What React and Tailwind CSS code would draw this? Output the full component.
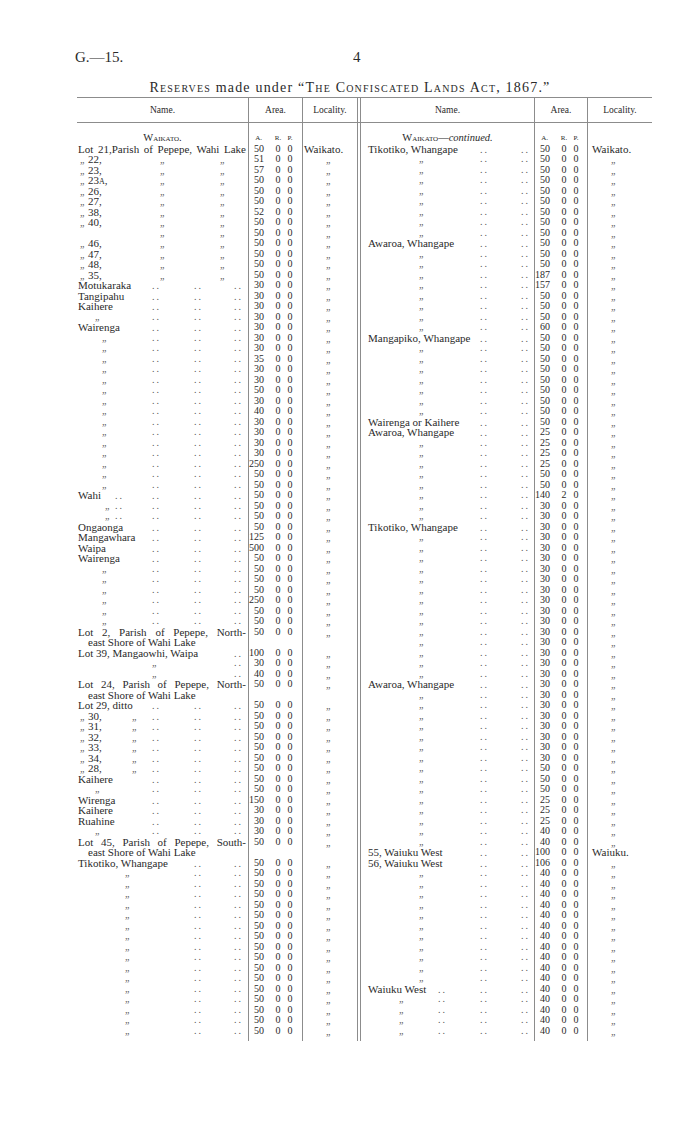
import React from 'react';

const ML = {
  1: 'ml-[1px]', 3: 'ml-[3px]', 7: 'ml-[7px]', 11: 'ml-[11px]', 18: 'ml-[18px]', 25: 'ml-[25px]',
  28: 'ml-[28px]', 38: 'ml-[38px]', 48: 'ml-[48px]', 55: 'ml-[55px]', 58: 'ml-[58px]', 75: 'ml-[75px]',
  77: 'ml-[77px]', 83: 'ml-[83px]', 117: 'ml-[117px]', 119: 'ml-[119px]', 143: 'ml-[143px]',
  157: 'ml-[157px]', 160: 'ml-[160px]',
};

const t = (x, s, j) => ({ x, s, j });
const d = (x) => ({ x, k: 'd' });
const p = (x) => ({ x, k: 'p' });
const LD = [p(75), p(117), p(157)];
const RD = [p(119), p(160)];

/* ── left half ── */
const left = [];
const L = (n, a, l = 'd') => left.push({ n, a, l });

L([t(1, 'Lot 21,Parish of Pepepe, Wahi Lake', true)], '50', 'Waikato.');
[['22,', '51'], ['23,', '57'], ['23A', '50'], ['26,', '50'], ['27,', '50'], ['38,', '52'], ['40,', '50'],
  [null, '50'], ['46,', '50'], ['47,', '50'], ['48,', '50'], ['35,', '50']].forEach(([n, a]) => {
  const num = n === '23A' ? <>23<span className="text-[8px]">A</span>,</> : n;
  L(n ? [d(3), t(11, num), d(83), d(143)] : [d(83), d(143)], a);
});
L([t(1, 'Motukaraka'), ...LD], '30');
L([t(1, 'Tangipahu'), ...LD], '30');
L([t(1, 'Kaihere'), ...LD], '30');
L([d(18), ...LD], '30');
L([t(1, 'Wairenga'), ...LD], '30');
['30', '30', '35', '30', '30', '50', '30', '40', '30', '30', '30', '30', '250', '50', '50']
  .forEach((a) => L([d(25), ...LD], a));
L([t(1, 'Wahi'), p(38), ...LD], '50');
L([d(28), p(38), ...LD], '50');
L([d(28), p(38), ...LD], '50');
L([t(1, 'Ongaonga'), ...LD], '50');
L([t(1, 'Mangawhara'), ...LD], '125');
L([t(1, 'Waipa'), ...LD], '500');
L([t(1, 'Wairenga'), ...LD], '50');
['50', '50', '50', '250', '50', '50'].forEach((a) => L([d(25), ...LD], a));
L([t(1, 'Lot 2, Parish of Pepepe, North-', true)], '50');
L([t(11, 'east Shore of Wahi Lake')], null, '');
L([t(1, 'Lot 39, Mangaowhi, Waipa'), p(157)], '100');
L([d(75), p(157)], '30');
L([d(75), p(157)], '40');
L([t(1, 'Lot 24, Parish of Pepepe, North-', true)], '50');
L([t(11, 'east Shore of Wahi Lake')], null, '');
L([t(1, 'Lot 29, ditto'), ...LD], '50');
['30,', '31,', '32,', '33,', '34,', '28,'].forEach((n) => L([d(3), t(11, n), d(55), ...LD], '50'));
L([t(1, 'Kaihere'), ...LD], '50');
L([d(18), ...LD], '50');
L([t(1, 'Wirenga'), ...LD], '150');
L([t(1, 'Kaihere'), ...LD], '30');
L([t(1, 'Ruahine'), ...LD], '30');
L([d(18), ...LD], '30');
L([t(1, 'Lot 45, Parish of Pepepe, South-', true)], '50');
L([t(11, 'east Shore of Wahi Lake')], null, '');
L([t(1, 'Tikotiko, Whangape'), p(117), p(157)], '50');
for (let i = 0; i < 16; i++) L([d(48), p(117), p(157)], '50');

/* ── right half ── */
const right = [];
const R = (n, a, l = 'd') => right.push({ n, a, l });
const RD_ = [d(58), ...RD];

R([t(7, 'Tikotiko, Whangape'), ...RD], '50', 'Waikato.');
for (let i = 0; i < 8; i++) R(RD_, '50');
R([t(7, 'Awaroa, Whangape'), ...RD], '50');
['50', '50', '187', '157', '50', '50', '50', '60'].forEach((a) => R(RD_, a));
R([t(7, 'Mangapiko, Whangape'), ...RD], '50');
for (let i = 0; i < 7; i++) R(RD_, '50');
R([t(7, 'Wairenga or Kaihere'), ...RD], '50');
R([t(7, 'Awaroa, Whangape'), ...RD], '25');
['25', '25', '25', '50', '50', '140 2 0', '30', '30'].forEach((a) => R(RD_, a));
R([t(7, 'Tikotiko, Whangape'), ...RD], '30');
for (let i = 0; i < 14; i++) R(RD_, '30');
R([t(7, 'Awaroa, Whangape'), ...RD], '30');
['30', '30', '30', '30', '30', '30', '30', '50', '50', '50', '25', '25', '25', '40', '40']
  .forEach((a) => R(RD_, a));
R([t(7, '55, Waiuku West'), ...RD], '100', 'Waiuku.');
R([t(7, '56, Waiuku West'), ...RD], '106');
for (let i = 0; i < 11; i++) R(RD_, '40');
R([t(7, 'Waiuku West'), p(77), ...RD], '40');
for (let i = 0; i < 4; i++) R([d(38), p(77), ...RD], '40');

const line = 'border-[#8c8c8c]';

const Ditto = () => <span className="text-[10px] text-[#555]">„</span>;

function Piece({ q }) {
  const base = `col-start-1 row-start-1 justify-self-start whitespace-nowrap ${ML[q.x]}`;
  if (q.k === 'd') return <span className={`${base} text-[10px] text-[#555]`}>„</span>;
  if (q.k === 'p') return <span className={`${base} text-[10px] tracking-[2px] text-[#555]`}>..</span>;
  return (
    <span className={`${base} ${q.j ? 'w-[168px] [text-align-last:justify]' : ''}`}>{q.s}</span>
  );
}

function Area({ a, w }) {
  const [A, Rr, P] = a ? a.split(' ').concat(['0', '0']).slice(0, 3) : ['', '', ''];
  return (
    <div className={`flex border-l ${line} text-[10px] ${w}`}>
      <span className="w-[15px] text-right">{A}</span>
      <span className="ml-[8px] w-[12px] text-center">{Rr}</span>
      <span className="w-[12px] text-center">{P}</span>
    </div>
  );
}

function Row({ r, left: isL, h = 'h-[10.5px]' }) {
  const locPad = r.l === 'd' ? 'pl-[23px]' : isL ? 'pl-[1px]' : 'pl-[4px]';
  return (
    <div className={`flex ${h} leading-[10.5px]`}>
      <div className={`grid items-baseline text-[11px] ${isL ? 'w-[171px]' : `w-[174px] border-l ${line}`}`}>
        {r.n.map((q, i) => <Piece key={i} q={q} />)}
      </div>
      <Area a={r.a} w={isL ? 'w-[54px]' : 'w-[53px]'} />
      <div className={`border-l ${line} text-[11px] ${isL ? 'w-[56px] border-r' : 'flex-1'} ${locPad}`}>
        {r.l === 'd' ? <Ditto /> : r.l}
      </div>
    </div>
  );
}

function Heading({ isL }) {
  return (
    <div className="flex h-[10.5px] leading-[10.5px]">
      <div className={`text-center text-[10.5px] ${isL ? 'w-[171px]' : `w-[174px] border-l ${line}`}`}>
        <span className="[font-variant:small-caps]">Waikato</span>
        {isL ? '.' : <>—<i>continued.</i></>}
      </div>
      <div className={`flex border-l ${line} text-[7px] uppercase ${isL ? 'w-[54px]' : 'w-[53px]'}`}>
        <span className="w-[15px] text-right pr-[2px]">a.</span>
        <span className="ml-[8px] w-[12px] text-center">r.</span>
        <span className="w-[12px] text-center">p.</span>
      </div>
      <div className={`border-l ${line} ${isL ? 'w-[56px] border-r' : 'flex-1'}`} />
    </div>
  );
}

const empty = { n: [], a: null, l: '' };

function Half({ rows, isL }) {
  return (
    <div className={isL ? 'w-[281px]' : 'ml-[2px] flex-1'}>
      <Row r={empty} left={isL} h="h-[10px]" />
      <Heading isL={isL} />
      {rows.map((r, i) => <Row key={i} r={r} left={isL} />)}
      <Row r={empty} left={isL} h="h-[5px]" />
    </div>
  );
}

export default function App() {
  return (
    <div className="w-[700px] h-[1141px] overflow-hidden bg-white pt-[48px] text-[#2a2a2a] font-['Liberation_Serif','Times_New_Roman',serif]">
      <div className="ml-[75px] flex h-[18px] items-center text-[15px]">
        <span className="w-[278px]">G.—15.</span>
        <span>4</span>
      </div>
      <div className="mt-[15px] h-[14px] text-center text-[14px] leading-[14px] tracking-[1.2px]">
        <span className="[font-variant:small-caps]">Reserves</span> made under “
        <span className="[font-variant:small-caps]">The Confiscated Lands Act</span>, 1867.”
      </div>
      <div className="ml-[77px] mt-[2px] w-[575px]">
        <div className={`flex h-[26px] border-y ${line} text-[9.5px]`}>
          <div className="flex w-[171px] items-center justify-center">Name.</div>
          <div className={`flex w-[54px] items-center justify-center border-l ${line}`}>Area.</div>
          <div className={`flex w-[56px] items-center justify-center border-x ${line}`}>Locality.</div>
          <div className="w-[2px]" />
          <div className={`flex w-[174px] items-center justify-center border-l ${line}`}>Name.</div>
          <div className={`flex w-[53px] items-center justify-center border-l ${line}`}>Area.</div>
          <div className={`flex flex-1 items-center justify-center border-l ${line}`}>Locality.</div>
        </div>
        <div className="flex">
          <Half rows={left} isL />
          <Half rows={right} />
        </div>
      </div>
    </div>
  );
}
